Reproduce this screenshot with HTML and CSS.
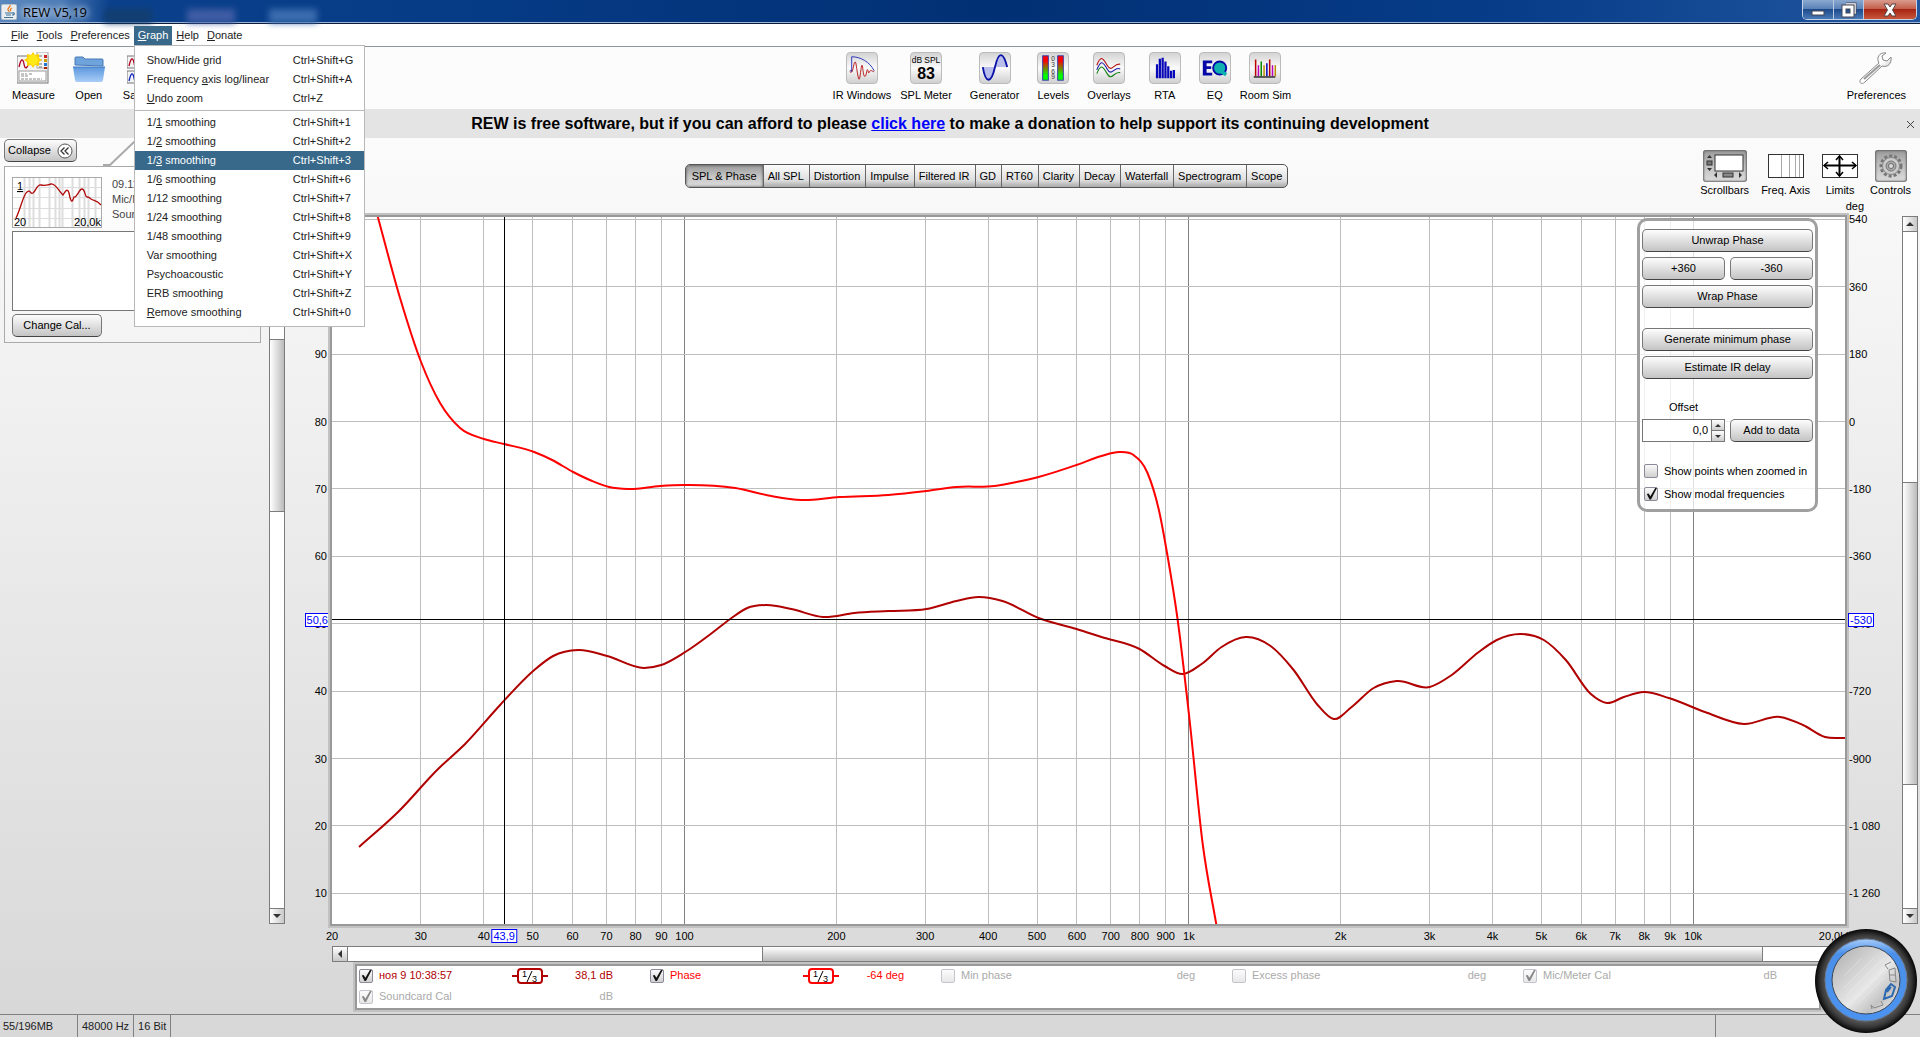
FILE: index.html
```html
<!DOCTYPE html>
<html lang="en">
<head>
  <meta charset="UTF-8" />
  <title>REW V5,19</title>
  <link rel="stylesheet" href="styles.css">
</head>
<body>
  <header class="titlebar">
    <svg class="app-icon" width="16" height="16" viewBox="0 0 16 16">
      <rect x="0" y="0" width="16" height="16" rx="2" fill="#e9edf0" stroke="#8da0b0"/>
      <path d="M9 1c1 2-3 3-2 5 .5 1 1.500 1 1 2M11 4c-2 1-2 2-1 3" fill="none" stroke="#e8781c" stroke-width="1.300"/>
      <path d="M4 9h7M5 11h5M3 13.500h9M11 9c3-1 3 2 0 2" fill="none" stroke="#3f7396" stroke-width="1.200"/>
    </svg>
    <span class="title">REW V5,19</span>
    <i class="ghost ghost-a"></i><i class="ghost ghost-b"></i><i class="ghost ghost-c"></i>
    <div class="window-buttons">
      <button aria-label="Minimize"><svg width="14" height="14"><rect x="1" y="8" width="12" height="4" fill="#fff" stroke="#445" /></svg></button>
      <button class="maximize" aria-label="Restore"><svg width="16" height="16"><path d="M5 2h9v9h-3" fill="none" stroke="#445" stroke-width="3"/><path d="M5 2h9v9h-3" fill="none" stroke="#fff" stroke-width="1.500"/><rect x="3" y="5" width="8" height="8" fill="none" stroke="#445" stroke-width="5"/><rect x="3" y="5" width="8" height="8" fill="none" stroke="#fff" stroke-width="3"/></svg></button>
      <button class="close" aria-label="Close"><svg width="16" height="14" viewBox="0 0 16 14"><path d="M2 1h4l2 3 2-3h4l-3.500 6 3.500 6h-4l-2-3-2 3H2l3.500-6z" fill="#fff" stroke="#544"/></svg></button>
    </div>
  </header>

  <nav class="menubar">
    <button><u>F</u>ile</button>
    <button><u>T</u>ools</button>
    <button><u>P</u>references</button>
    <div class="menu-open">
      <button class="active"><u>G</u>raph</button>
      <div class="menu">
        <button><span>Show/Hide <u>g</u>rid</span><kbd>Ctrl+Shift+G</kbd></button>
        <button><span>Frequency <u>a</u>xis log/linear</span><kbd>Ctrl+Shift+A</kbd></button>
        <button><span><u>U</u>ndo zoom</span><kbd>Ctrl+Z</kbd></button>
        <hr>
        <button><span>1/<u>1</u> smoothing</span><kbd>Ctrl+Shift+1</kbd></button>
        <button><span>1/<u>2</u> smoothing</span><kbd>Ctrl+Shift+2</kbd></button>
        <button class="active"><span>1/<u>3</u> smoothing</span><kbd>Ctrl+Shift+3</kbd></button>
        <button><span>1/<u>6</u> smoothing</span><kbd>Ctrl+Shift+6</kbd></button>
        <button><span>1/12 smoothing</span><kbd>Ctrl+Shift+7</kbd></button>
        <button><span>1/24 smoothing</span><kbd>Ctrl+Shift+8</kbd></button>
        <button><span>1/48 smoothing</span><kbd>Ctrl+Shift+9</kbd></button>
        <button><span>Var smoothing</span><kbd>Ctrl+Shift+X</kbd></button>
        <button><span>Psychoacoustic</span><kbd>Ctrl+Shift+Y</kbd></button>
        <button><span>ERB smoothing</span><kbd>Ctrl+Shift+Z</kbd></button>
        <button><span><u>R</u>emove smoothing</span><kbd>Ctrl+Shift+0</kbd></button>
      </div>
    </div>
    <button><u>H</u>elp</button>
    <button><u>D</u>onate</button>
  </nav>

  <div class="toolbar">
    <div class="tools tools-file">
      <button class="tool">
        <svg width="32" height="32">
          <rect x="0" y="4" width="31" height="27" fill="#f4f4f4" stroke="#777"/>
          <rect x="20" y="0" width="11" height="16" fill="#f4f4f4" stroke="#aaa"/>
          <path d="M2 15c2-9 4-9 5-3s3 5 5-2" fill="none" stroke="#b00020" stroke-width="1.300"/>
          <rect x="2" y="19" width="27" height="10" fill="#fff" stroke="#999"/>
          <path d="M4 22h6m2 0h3M4 24h8M4 27h21" stroke="#888" stroke-dasharray="3 1"/>
          <path d="M22 4h3m-3 4h3m-3 4h3m-3 3h3" stroke="#777"/>
          <path d="M27 3h3v3h-3z" fill="#c22"/><path d="M27 7h3v3h-3z" fill="#c90"/><path d="M27 11h3v3h-3z" fill="#27c"/><path d="M27 15h3v2h-3z" fill="#a20"/>
          <path d="M16 0l2 3 4-1v4l3 2-3 2 0 4-4-1-2 3-2-3-4 1 0-4-3-2 3-2V2l4 1z" fill="#ffd400"/>
          <circle cx="16" cy="8" r="5" fill="#ffea18"/>
        </svg>
        Measure
      </button>
      <button class="tool">
        <svg width="34" height="32">
          <defs><linearGradient id="folder" x1="0" y1="0" x2="0" y2="1"><stop offset="0" stop-color="#5b97dd"/><stop offset="1" stop-color="#a9cdf7"/></linearGradient></defs>
          <path d="M3 13V6q0-1 1-1h7l2 2h17q1 0 1 1v6z" fill="#6ea3dc" stroke="#4779b5"/>
          <path d="M1 15h32l-2 13q0 2-2 2H5q-2 0-2-2z" fill="url(#folder)"/>
          <path d="M1 15h32" stroke="#3c78c4"/>
        </svg>
        Open
      </button>
      <button class="tool">
        <svg width="32" height="32">
          <rect x="0" y="4" width="31" height="12" fill="#f4f4f4" stroke="#777"/>
          <rect x="0" y="19" width="31" height="12" fill="#f4f4f4" stroke="#777"/>
          <path d="M2 14c2-9 4-9 5-3s3 5 5-2" fill="none" stroke="#b00020" stroke-width="1.300"/>
          <path d="M2 29c2-9 4-9 5-3s3 5 5-2" fill="none" stroke="#1122c0" stroke-width="1.300"/>
        </svg>
        Save All
      </button>
    </div>
    <div class="tools">
      <button class="tool">
        <svg class="tile" viewBox="0 0 32 32"><path d="M5 20V4c9 0 19 5 24 15M3 19h3" fill="none" stroke="#2430b8"/><path d="M3 20c2 2 3-1 4-6s2-7 3 0 2 14 3 14 2-15 3-15 1 12 3 12 2-9 3-7 1 5 2 2 3 0 5 0" fill="none" stroke="#b81414"/></svg>
        IR Windows
      </button>
      <button class="tool">
        <svg class="tile" viewBox="0 0 32 32"><text x="16" y="11" font-size="9" text-anchor="middle">dB SPL</text><text x="16" y="28" font-size="17" font-weight="bold" text-anchor="middle">83</text></svg>
        SPL Meter
      </button>
      <button class="tool spaced">
        <svg class="tile" viewBox="0 0 32 32"><path d="M3 15h13C13 34 7 34 3 15M16 15c3-16 9-16 13 0z" fill="#b9bdea"/><path d="M3 15c3 18 9 18 13 0s9-16 13 0" fill="none" stroke="#0a12a8" stroke-width="2"/></svg>
        Generator
      </button>
      <button class="tool spaced">
        <svg class="tile" viewBox="0 0 32 32">
          <defs><linearGradient id="level" x1="0" y1="0" x2="0" y2="1"><stop offset="0.200" stop-color="#f00"/><stop offset="0.800" stop-color="#0f0"/></linearGradient></defs>
          <rect x="5" y="3" width="6" height="26" fill="url(#level)" stroke="#33a"/><rect x="21" y="3" width="6" height="26" fill="url(#level)" stroke="#33a"/>
          <g font-size="7" text-anchor="middle" fill="#333"><text x="16" y="9">0</text><text x="16" y="15">3</text><text x="16" y="22">6</text><text x="16" y="28">9</text></g>
        </svg>
        Levels
      </button>
      <button class="tool spaced">
        <svg class="tile" viewBox="0 0 32 32" fill="none" stroke-width="1.200"><path d="M3 13c4-10 6-9 11 0s7-3 14-1" stroke="#b81414"/><path d="M3 18c4-10 6-10 11-1s7-3 14 0" stroke="#1a1aa8"/><path d="M3 22c4-10 6-9 11 0s7-3 14-1" stroke="#118011"/></svg>
        Overlays
      </button>
      <button class="tool spaced">
        <svg class="tile" viewBox="0 0 32 32"><path d="M7.500 27V12m3 15V6m3 21V5m3 22V9m3 18V14m3 13v-8m3 8v-9" stroke="#0808b8" stroke-width="2.400"/></svg>
        RTA
      </button>
      <button class="tool spaced">
        <svg class="tile" viewBox="0 0 32 32"><path d="M3 8h10v3H7v3h5v3H7v4h6v3H3z" fill="#0707a8"/><circle cx="21" cy="16" r="7" fill="#10b0b0" stroke="#0707a8" stroke-width="2"/><path d="M23 20l5 3" stroke="#10b0b0" stroke-width="4"/></svg>
        EQ
      </button>
      <button class="tool">
        <svg class="tile" viewBox="0 0 32 32" stroke-width="1.600"><path d="M6 25V7M21 25V7" stroke="#b00"/><path d="M9 25V13M24 25V13" stroke="#b0b"/><path d="M12 25V9" stroke="#080"/><path d="M15 25V13M27 25V13" stroke="#b80"/><path d="M18 25V11" stroke="#00b"/><path d="M4 25.500h23" stroke="#333"/></svg>
        Room Sim
      </button>
    </div>
    <div class="tools">
      <button class="tool">
        <svg width="34" height="32" viewBox="0 0 34 32">
          <defs><linearGradient id="steel" x1="0" y1="0" x2="1" y2="1"><stop offset="0" stop-color="#eee"/><stop offset="0.500" stop-color="#fff"/><stop offset="1" stop-color="#999"/></linearGradient></defs>
          <path d="M27 1c-7-1-10 5-7 10L2 27c-3 4 1 6 4 3L23 14c6 2 10-3 9-9l-4 4-4-1-1-4z" fill="url(#steel)" stroke="#888"/>
          <path d="M5 27L21 13" stroke="#999" stroke-width="2"/><circle cx="4" cy="29" r="1.500" fill="#fff"/>
        </svg>
        Preferences
      </button>
    </div>
  </div>

  <div class="banner">
    <p>REW is free software, but if you can afford to please <a href="#">click here</a> to make a donation to help support its continuing development</p>
    <button aria-label="Dismiss"><svg width="7" height="7"><path d="M0 0l7 7M7 0L0 7" stroke="#444"/></svg></button>
  </div>

  <main>
    <aside class="measurements">
      <div class="measure-list">
        <div class="tab-row">
          <button class="btn collapse">Collapse
            <svg width="16" height="16"><circle cx="8" cy="8" r="7" fill="#fff" stroke="#555"/><path d="M7.500 4.500l-3.500 3.500 3.500 3.500M11.500 4.500L8 8l3.500 3.500" fill="none" stroke="#333" stroke-width="1.300"/></svg>
          </button>
          <svg class="tab-edge" width="34" height="26"><path d="M0 25h7L31 2h3v24H0z" fill="#fff"/><path d="M0 25h7L31 2h3" fill="none" stroke="#aaa" stroke-width="2"/></svg>
          <div class="tab-name"></div>
        </div>
        <section class="measure-card">
          <div class="measure-head">
            <svg class="thumb" width="90" height="51">
              <path d="M0 9.500h90M0 19.500h90M0 30.500h90M0 40.500h90" stroke="#ddd"/>
              <path d="M11.500 0v51M16.500 0v51M20.500 0v51M26.500 0v51M36.500 0v51M42.500 0v51M46.500 0v51M49.500 0v51M59.500 0v51M66.500 0v51M71.500 0v51M75.500 0v51M82.500 0v51" stroke="#ddd" stroke-width="2"/>
              <path d="M3 40C8 30 10 17 14 14s3 3 6 1 4-9 8-8 6 0 10-1 8 7 12 11c2-3 4-8 6-2 2 10 3 10 5 4 3 1 5-8 8-8s3 8 5 8 1 0 4 2 6 1 10 6" fill="none" stroke="#b00808" stroke-width="1.300"/>
              <text x="4" y="12" text-decoration="underline">1</text><text x="1" y="48">20</text><text x="88" y="48" text-anchor="end">20,0k</text>
            </svg>
            <div class="measure-info">09.11.2018<br>Mic/Meter<br>Soundcard</div>
          </div>
          <textarea aria-label="Notes"></textarea>
          <button class="btn">Change Cal...</button>
        </section>
      </div>
      <div class="vscroll list-scroll">
        <button aria-label="Up"><i class="up"></i></button>
        <div class="track"><span class="before"></span><span class="thumb-v"></span><span class="after"></span></div>
        <button aria-label="Down"><i class="down"></i></button>
      </div>
    </aside>

    <section class="graph">
      <div class="graph-head">
        <div class="tabs">
          <button class="selected">SPL &amp; Phase</button><button>All SPL</button><button>Distortion</button><button>Impulse</button><button>Filtered IR</button><button>GD</button><button>RT60</button><button>Clarity</button><button>Decay</button><button>Waterfall</button><button>Spectrogram</button><button>Scope</button>
        </div>
        <div class="graph-tools">
          <button class="tool">
            <svg class="pressed" width="44" height="32"><rect x="12" y="5" width="28" height="16" fill="#fff" stroke="#333"/><path d="M4 8l2.500-3L9 8zM4 18l2.500 3L9 18zM14 22v6l-3-3zM36 22v6l3-3z" fill="#333"/><rect x="4" y="11" width="5" height="4" fill="#777" stroke="#333"/><rect x="20" y="23" width="10" height="4" fill="#888" stroke="#333"/></svg>
            Scrollbars
          </button>
          <button class="tool">
            <svg width="36" height="32"><rect x="0.500" y="4.500" width="35" height="23" fill="#fff" stroke="#333"/><path d="M13.500 5v22M21.500 5v22M27.500 5v22M31.500 5v22" stroke="#aaa"/></svg>
            Freq. Axis
          </button>
          <button class="tool">
            <svg width="36" height="32"><rect x="0.500" y="4.500" width="35" height="23" fill="#fff" stroke="#333"/><path d="M2 15.500h32M17.500 6v20" stroke="#000" stroke-width="2"/><path d="M6 12l-4 3.500L6 19M30 12l4 3.500-4 3.500M14 10l3.500-4 3.500 4M14 22l3.500 4 3.500-4" fill="none" stroke="#000" stroke-width="1.500"/></svg>
            Limits
          </button>
          <button class="tool">
            <svg class="pressed" width="32" height="32"><circle cx="16" cy="16" r="10" fill="none" stroke="#777" stroke-width="3" stroke-dasharray="3 2"/><circle cx="16" cy="16" r="8.500" fill="#ccc" stroke="#888"/><circle cx="16" cy="16" r="5" fill="#aaa" stroke="#777"/><circle cx="16" cy="16" r="2.500" fill="#ddd" stroke="#666"/></svg>
            Controls
          </button>
        </div>
        <span class="unit">deg</span>
      </div>

      <div class="axis axis-left" id="dbAxis"></div>
      <div class="plot">
        <svg id="plot" viewBox="0 0 1512 707" preserveAspectRatio="none"></svg>
        <div class="controls">
          <button class="btn wide">Unwrap Phase</button>
          <button class="btn">+360</button>
          <button class="btn">-360</button>
          <button class="btn wide">Wrap Phase</button>
          <button class="btn wide group">Generate minimum phase</button>
          <button class="btn wide">Estimate IR delay</button>
          <label class="offset-label" for="offset">Offset</label>
          <div class="spinner">
            <input type="text" id="offset" value="0,0">
            <div><button aria-label="Increase"><i class="up"></i></button><button aria-label="Decrease"><i class="down"></i></button></div>
          </div>
          <button class="btn">Add to data</button>
          <label class="check group"><input type="checkbox">Show points when zoomed in</label>
          <label class="check"><input type="checkbox" checked>Show modal frequencies</label>
        </div>
      </div>
      <div class="axis axis-right" id="degAxis"></div>
      <div class="vscroll plot-scroll">
        <button aria-label="Up"><i class="up"></i></button>
        <div class="track"><span class="before"></span><span class="thumb-v"></span><span class="after"></span></div>
        <button aria-label="Down"><i class="down"></i></button>
      </div>

      <div class="axis axis-bottom" id="freqAxis"></div>
      <div class="hscroll">
        <button aria-label="Left"><i class="left"></i></button>
        <div class="track"><span class="before"></span><span class="thumb-h"></span><span class="after"></span></div>
        <button aria-label="Right"><i class="right"></i></button>
      </div>

      <div class="legend">
        <div class="trace spl"><label class="check"><input type="checkbox" checked>ноя 9 10:38:57</label>
          <svg width="36" height="18"><path d="M0 9h6M30 9h6" stroke="currentColor" stroke-width="2"/><rect x="6" y="2" width="24" height="14" rx="3" fill="#fff" stroke="currentColor" stroke-width="2"/><path d="M15 15l5-11" stroke="#000"/><text x="10" y="10" font-size="9">1</text><text x="20" y="15" font-size="9">3</text></svg>
          <output>38,1 dB</output></div>
        <div class="trace phase"><label class="check"><input type="checkbox" checked>Phase</label>
          <svg width="36" height="18"><path d="M0 9h6M30 9h6" stroke="currentColor" stroke-width="2"/><rect x="6" y="2" width="24" height="14" rx="3" fill="#fff" stroke="currentColor" stroke-width="2"/><path d="M15 15l5-11" stroke="#000"/><text x="10" y="10" font-size="9">1</text><text x="20" y="15" font-size="9">3</text></svg>
          <output>-64 deg</output></div>
        <div class="trace off"><label class="check"><input type="checkbox" disabled>Min phase</label><output>deg</output></div>
        <div class="trace off"><label class="check"><input type="checkbox" disabled>Excess phase</label><output>deg</output></div>
        <div class="trace off"><label class="check"><input type="checkbox" checked disabled>Mic/Meter Cal</label><output>dB</output></div>
        <div class="trace off"><label class="check"><input type="checkbox" checked disabled>Soundcard Cal</label><output>dB</output></div>
      </div>
    </section>
  </main>

  <footer class="statusbar">
    <span class="memory">55/196MB</span><span>48000 Hz</span><span>16 Bit</span><span class="fill"></span><span class="end"></span>
  </footer>

  <!-- volume knob gadget floating over the desktop -->
  <svg class="knob" width="104" height="106" viewBox="0 0 104 106">
    <defs>
      <radialGradient id="rim"><stop offset="0.780" stop-color="#555"/><stop offset="0.880" stop-color="#3a3a3a"/><stop offset="1" stop-color="#060606"/></radialGradient>
      <linearGradient id="blue" x1="0" y1="0" x2="0" y2="1"><stop offset="0" stop-color="#a6cbfa"/><stop offset="0.180" stop-color="#4a90ea"/><stop offset="1" stop-color="#4b93f0"/></linearGradient>
      <linearGradient id="metal" x1="0" y1="0" x2="1" y2="1"><stop offset="0" stop-color="#aaa"/><stop offset="0.300" stop-color="#ccc"/><stop offset="0.550" stop-color="#e8e8e8"/><stop offset="0.750" stop-color="#c4c4c4"/><stop offset="1" stop-color="#f2f2f2"/></linearGradient>
    </defs>
    <ellipse cx="52" cy="53" rx="51" ry="52" fill="url(#rim)"/>
    <circle cx="52" cy="52" r="41" fill="url(#blue)" stroke="#6a7c96"/>
    <circle cx="52" cy="52" r="34" fill="url(#metal)" stroke="#3c4656"/>
    <path d="M30 60l30-30M32 68l38-38M40 72l36-36M30 48l18-18M44 76l26-26" stroke="#fff" opacity="0.250"/>
    <g fill="none" stroke="#888"><path d="M71 37l6-3M74 41l-3-4M75 42l6-2 1 14-6-1zM75 47h6"/><path d="M72 62l5-6 4 3-3 9-8 3zM73 64l4-5" stroke="#2d68b0" stroke-width="2"/><path d="M57 77l3 3 9-3-2-4M57 77l1 4"/></g>
  </svg>

  <script>
    const NS = "http://www.w3.org/2000/svg";
    const W = 1512, H = 707;
    const plot = document.getElementById("plot");

    const fx = f => Math.log10(f / 20) / 3 * W;
    const dy = db => (110.35 - db) * 6.74;
    const degToDb = deg => 80 + deg / 18;

    function draw(d, cls) {
      const path = document.createElementNS(NS, "path");
      path.setAttribute("d", d);
      path.setAttribute("class", cls);
      plot.appendChild(path);
    }

    function label(axis, text, side, value, cls) {
      const span = document.createElement("span");
      span.textContent = text;
      span.style[side] = value + "%";
      if (cls) span.className = cls;
      document.getElementById(axis).appendChild(span);
    }

    // frequency grid, log scale
    for (let decade = 10; decade <= 10000; decade *= 10) {
      for (let n = 1; n < 10; n++) {
        const f = decade * n;
        if (f < 20 || f > 10000) continue;
        if (f > 20) draw(`M${fx(f)} 0V${H}`, n === 1 ? "grid major" : "grid");
        label("freqAxis", f >= 1000 ? f / 1000 + "k" : f, "left", fx(f) / W * 100);
      }
    }
    label("freqAxis", "20,0kHz", "left", 100, "last");

    for (let db = 10; db <= 110; db += 10) {
      draw(`M0 ${dy(db)}H${W}`, "grid");
      label("dbAxis", db, "top", dy(db) / H * 100);
    }
    ["540", "360", "180", "0", "-180", "-360", "-540", "-720", "-900", "-1 080", "-1 260"].forEach((text, i) => {
      label("degAxis", text, "top", dy(degToDb(540 - i * 180)) / H * 100);
    });

    const phase = [[45,-3],[68,81],[89,145],[108,186],[128,211],[152,222],[172,227],[202,235],[220,243],[241,255],[260,264],[277,270],[296,272],[328,269],[352,268],[403,271],[439,279],[469,283],[507,280],[556,278],[594,274],[624,270],[662,269],[684,265],[706,260],[744,248],[769,239],[787,235],[801,238],[815,256],[827,296],[835,339],[845,402],[857,503],[870,626],[884,709]];
    const spl = [[27,630],[66,595],[106,552],[133,527],[168,488],[201,454],[221,439],[246,433],[275,439],[312,451],[329,448],[353,435],[381,415],[398,402],[415,391],[434,388],[459,392],[491,400],[522,396],[556,394],[594,392],[624,384],[646,380],[670,384],[706,401],[744,412],[769,420],[807,432],[832,449],[850,457],[869,447],[889,430],[913,420],[938,429],[961,453],[985,488],[1001,502],[1019,490],[1041,471],[1064,464],[1097,470],[1119,458],[1146,435],[1164,423],[1188,417],[1211,423],[1233,443],[1258,477],[1274,486],[1291,480],[1311,475],[1336,481],[1372,495],[1411,507],[1447,500],[1470,508],[1492,520],[1512,521]];

    // cubic through the points, slope at each one weighted by its spacing
    function smooth(p) {
      const step = p.slice(1).map((b, i) => b[0] - p[i][0]);
      const rise = p.slice(1).map((b, i) => (b[1] - p[i][1]) / step[i]);
      const slope = p.map((_, i) => {
        if (i === 0) return rise[0];
        if (i === p.length - 1) return rise[i - 1];
        return (rise[i - 1] * step[i] + rise[i] * step[i - 1]) / (step[i - 1] + step[i]);
      });
      let d = `M${p[0]}`;
      for (let i = 0; i < step.length; i++) {
        const [x0, y0] = p[i], [x1, y1] = p[i + 1], h = step[i] / 3;
        d += `C${x0 + h} ${y0 + slope[i] * h} ${x1 - h} ${y1 - slope[i + 1] * h} ${x1} ${y1}`;
      }
      return d;
    }
    draw(smooth(spl), "curve-spl");
    draw(smooth(phase), "curve-phase");

    // cursor
    const cx = fx(43.9), cy = dy(50.6);
    draw(`M${cx} 0V${H}M0 ${cy}H${W}`, "cursor");
    label("freqAxis", "43,9", "left", cx / W * 100, "tag");
    label("dbAxis", "50,6", "top", cy / H * 100, "tag");
    label("degAxis", "-530", "top", cy / H * 100, "tag");
  </script>
</body>
</html>
```
FILE: styles.css
```css
* {
  box-sizing: border-box;
}
body {
  margin: 0;
  height: 100vh;
  display: flex;
  flex-direction: column;
  overflow: hidden;
  position: relative;
  font-family: "Liberation Sans", Arial, sans-serif;
  font-size: 11px;
  line-height: 13px;
  color: #000;
  background: #d8d8d8;
}
button, input, textarea, kbd {
  font: inherit;
  color: inherit;
}
button {
  padding: 0;
  border: 0;
  background: none;
}
svg {
  display: block;
}

/* title bar */
.titlebar {
  height: 24px;
  display: flex;
  align-items: center;
  position: relative;
  padding-left: 1px;
  border-bottom: 1px solid #0a1c3c;
  box-shadow: inset 0 -1px #9db4d4;
  background: linear-gradient(90deg, #5a87bd 0, #4d7cb6 60px, #0b418c 110px, #053a84 500px, #023074 1000px, #063c88 1500px, #22569f 100%);
}
.title {
  margin-left: 6px;
  font: 13px/16px "Open Sans", sans-serif;
  text-shadow: 0 0 6px #fff, 0 0 8px #cfe0f4;
}
.ghost {
  position: absolute;
  top: 9px;
  width: 48px;
  height: 14px;
  filter: blur(3px);
  background: #3a6cae;
}
.ghost-a { left: 104px; background: #123e70; }
.ghost-b { left: 187px; background: #3f5ca4; }
.ghost-c { left: 269px; }
.window-buttons {
  display: flex;
  align-self: flex-start;
  margin: 0 3px 0 auto;
  height: 20px;
  border: 1px solid #c5d3e6;
  border-top: 0;
  border-radius: 0 0 5px 5px;
  overflow: hidden;
}
.window-buttons button {
  width: 31px;
  display: flex;
  align-items: center;
  justify-content: center;
  border-right: 1px solid #b9cae2;
  background: linear-gradient(#8aa9d0, #5b83b8 45%, #1d4b8c 50%, #4a7ab8);
}
.window-buttons .maximize {
  width: 30px;
}
.window-buttons .close {
  width: 52px;
  border: 0;
  background: linear-gradient(#d99b8c, #c4604c 45%, #a62512 50%, #c9573c);
}

/* menus */
.menubar {
  display: flex;
  height: 23px;
  padding: 2px 7px;
  border-bottom: 1px solid #8f9498;
  background: #fff;
  color: #222;
}
.menubar > button, .menu-open > button {
  height: 19px;
  padding: 0 4px;
}
.menu-open {
  position: relative;
}
.menubar .active {
  background: #39698a;
  color: #fff;
}
.menu {
  position: absolute;
  z-index: 5;
  top: 19px;
  left: 0;
  width: 231px;
  padding: 5px 0 4px;
  border: 1px solid #b8b8b8;
  background: #fff;
}
.menu button {
  display: flex;
  align-items: center;
  width: 100%;
  height: 19px;
  padding-left: 12px;
  text-align: left;
}
.menu span {
  width: 146px;
}
.menu hr {
  margin: 2px 0;
  border: 0;
  border-top: 1px solid #b8b8b8;
}

/* toolbar */
.toolbar {
  display: flex;
  justify-content: space-between;
  height: 62px;
  padding: 5px 14px 0 12px;
  background: #fcfcfc;
}
.tools {
  display: flex;
  align-items: flex-start;
  gap: 9px;
}
.tools-file {
  gap: 17px;
  flex-basis: 265px;
}
.tool {
  display: flex;
  flex-direction: column;
  align-items: center;
  gap: 5px;
  min-width: 32px;
  white-space: nowrap;
}
.spaced {
  margin-left: 9px;
}
.tile {
  width: 32px;
  height: 32px;
  border: 1px solid #bbb;
  border-radius: 4px;
  background: linear-gradient(#d4d4d4, #fafafa 50%, #d0d0d0);
}

.banner {
  display: flex;
  align-items: center;
  height: 29px;
  padding: 1px 6px 0 0;
  background: #e4e4e4;
}
.banner p {
  flex: 1;
  margin: 0;
  padding-right: 7px;
  text-align: center;
  font-size: 16px;
  line-height: 20px;
  font-weight: bold;
}
.banner a {
  color: #00f;
}

/* shared widgets */
.btn {
  height: 23px;
  border: 1px solid #777;
  border-bottom-color: #444;
  border-radius: 5px;
  background: linear-gradient(#fdfdfd, #e6e6e6 40%, #c4c4c4);
}
.check {
  display: flex;
  align-items: center;
  gap: 6px;
}
.check input {
  appearance: none;
  width: 14px;
  height: 14px;
  margin: 0;
  border: 1px solid #8a8a98;
  border-radius: 2px;
  background: linear-gradient(#fafafa, #d0d0d0);
}
.check input:checked::before {
  content: "";
  display: block;
  width: 12px;
  height: 12px;
  background: #111;
  clip-path: polygon(15% 50%, 30% 45%, 45% 68%, 85% 0, 100% 0, 50% 95%, 38% 95%);
}
.check input:disabled {
  opacity: 0.5;
}
.up, .down, .left, .right {
  border: 4px solid transparent;
}
.up { border-top: 0; border-bottom-color: #333; }
.down { border-bottom: 0; border-top-color: #333; }
.left { border-left: 0; border-right-color: #333; }
.right { border-right: 0; border-left-color: #333; }

.vscroll, .hscroll {
  display: flex;
  border: 1px solid #7c7c7c;
  background: #fff;
}
.vscroll {
  flex-direction: column;
  width: 16px;
}
.vscroll button, .hscroll button {
  display: flex;
  align-items: center;
  justify-content: center;
  width: 14px;
  height: 14px;
  background: linear-gradient(90deg, #fff, #c8c8c8);
}
.track {
  flex: 1;
  display: flex;
}
.vscroll .track {
  flex-direction: column;
  border: solid #7c7c7c;
  border-width: 1px 0;
}
.hscroll .track {
  border: solid #7c7c7c;
  border-width: 0 1px;
}
.thumb-v {
  border: solid #7c7c7c;
  border-width: 1px 0;
  background: linear-gradient(90deg, #fff, #bbb);
}
.thumb-h {
  border: solid #7c7c7c;
  border-width: 0 1px;
  background: linear-gradient(#fff, #bbb);
}

main {
  flex: 1;
  display: flex;
  min-height: 0;
  background: linear-gradient(#fbfbfb, #d8d8d8);
}

/* measurement list */
.measurements {
  display: flex;
  gap: 8px;
  width: 285px;
  padding: 0 0 90px 4px;
}
.measure-list {
  flex: 1;
}
.tab-row {
  display: flex;
  height: 28px;
}
.collapse {
  display: flex;
  align-items: center;
  justify-content: center;
  gap: 6px;
  width: 73px;
  margin: 1px 26px 0 0;
}
.tab-edge {
  margin-top: 2px;
}
.tab-name {
  flex: 1;
  margin-top: 3px;
  border-top: 2px solid #aaa;
  background: #fff;
}
.measure-card {
  padding: 10px 7px 5px;
  border: 1px solid #aaa;
  background: linear-gradient(#fff, #f4f4f4);
}
.measure-head {
  display: flex;
  gap: 10px;
}
.thumb {
  border: 1px solid #aaa;
  background: #fff;
}
.thumb text {
  font-size: 11px;
}
.measure-info {
  line-height: 15px;
  color: #444;
}
.measure-card textarea {
  display: block;
  width: 100%;
  height: 80px;
  margin: 3px 0;
  border: 1px solid #777;
  background: #fff;
  resize: none;
}
.measure-card .btn {
  width: 90px;
}
.list-scroll {
  margin-top: 28px;
}
.list-scroll .before { flex: 158; }
.list-scroll .thumb-v { flex: 172; }
.list-scroll .after { flex: 399; }

/* graph area */
.graph {
  flex: 1;
  display: grid;
  grid-template-columns: 45px 1fr 55px 16px;
  grid-template-rows: 77px 1fr 20px 16px 2px 46px;
  padding: 0 2px 4px 0;
}
.graph-head {
  grid-column: 1 / -1;
  display: flex;
  justify-content: center;
  align-items: flex-start;
  position: relative;
  padding-right: 230px;
}
.tabs {
  display: flex;
  height: 24px;
  margin-top: 26px;
  border: 1px solid #555;
  border-radius: 5px;
  overflow: hidden;
  background: linear-gradient(#fcfcfc, #ddd 70%, #aaa);
}
.tabs button {
  padding: 0 5px 0 4px;
  border-right: 1px solid #666;
}
.tabs button:last-child {
  border-right: 0;
}
.tabs .selected {
  padding: 0 6px;
  background: linear-gradient(#999, #c4c4c4 50%, #ddd);
  box-shadow: inset 0 0 3px #444;
}
.graph-tools {
  position: absolute;
  top: 12px;
  right: 7px;
  display: flex;
  gap: 12px;
}
.graph-tools .tool {
  gap: 2px;
}
.pressed {
  border-radius: 3px;
  background: linear-gradient(#999, #bbb 40%, #ddd);
  box-shadow: inset 0 0 2px 1px #666;
}
.unit {
  position: absolute;
  top: 62px;
  right: 54px;
}
.plot {
  position: relative;
  min-height: 0;
  border: 2px solid #999;
  box-shadow: 0 0 0 2px #c2c2c2;
  background: #fff;
}
#plot {
  position: absolute;
  width: 100%;
  height: 100%;
}
#plot path {
  fill: none;
  vector-effect: non-scaling-stroke;
}
.grid, .cursor {
  shape-rendering: crispEdges;
}
.grid { stroke: #bebebe; }
.grid.major { stroke: #808080; }
.cursor { stroke: #000; }
.curve-spl { stroke: #b00000; stroke-width: 2px; }
.curve-phase { stroke: #f00; stroke-width: 2px; }

.axis {
  position: relative;
}
.axis-left, .axis-right {
  margin: 2px 0;
}
.axis-bottom {
  grid-column: 2;
  margin: 0 2px;
}
/* labels sit at their value along the axis */
.axis span {
  position: absolute;
  white-space: nowrap;
}
.axis-left span {
  right: 3px;
  transform: translateY(-50%);
}
.axis-right span {
  left: 2px;
  transform: translateY(-50%);
}
.axis-bottom span {
  top: 4px;
  transform: translateX(-50%);
}
.axis-bottom .last {
  padding-right: 12px;
}
.axis .tag {
  padding: 0 1px;
  border: 1px solid #00f;
  background: #fff;
  color: #00f;
  line-height: 12px;
}
.axis-left .tag {
  right: 0;
}
.axis-right .tag {
  left: 1px;
}
.axis-bottom .tag {
  top: 3px;
}
.plot-scroll {
  margin: 1px 0 2px;
}
.plot-scroll .before { flex: 251; }
.plot-scroll .thumb-v { flex: 303; }
.plot-scroll .after { flex: 124; }
.hscroll {
  grid-column: 2;
  margin: 0 2px;
}
.hscroll button {
  background: linear-gradient(#fff, #c8c8c8);
}
.hscroll .before { flex: 414; }
.hscroll .thumb-h { flex: 1000; }
.hscroll .after { flex: 66; }

/* phase controls panel */
.controls {
  position: absolute;
  top: 1px;
  right: 27px;
  width: 181px;
  display: grid;
  grid-template-columns: repeat(2, minmax(0, 1fr));
  gap: 5px;
  padding: 8px 2px 4px;
  border: 3px solid #a0a0a0;
  border-radius: 10px;
  background: rgba(255, 255, 255, 0.75);
}
.controls .wide, .controls .check {
  grid-column: 1 / -1;
}
.controls .wide.group {
  margin-top: 15px;
}
.offset-label {
  grid-column: 1;
  margin-top: 17px;
  text-align: center;
}
.spinner {
  grid-column: 1;
  display: flex;
  height: 23px;
  border: 1px solid #777;
  background: #fff;
}
.spinner input {
  flex: 1;
  min-width: 0;
  border: 0;
  padding: 0 3px;
  text-align: right;
}
.spinner div {
  display: flex;
  flex-direction: column;
  width: 13px;
  border-left: 1px solid #777;
}
.spinner button {
  flex: 1;
  display: flex;
  align-items: center;
  justify-content: center;
  background: linear-gradient(#fff, #ccc);
}
.spinner button + button {
  border-top: 1px solid #777;
}
.spinner i {
  border-width: 3px;
}
.spinner .up { border-top: 0; }
.spinner .down { border-bottom: 0; }
.controls .check {
  margin: 0 0 4px 2px;
}
.controls .check.group {
  margin-top: 17px;
}

.legend {
  grid-row: 6;
  grid-column: 2;
  display: grid;
  grid-template-columns: repeat(5, 1fr);
  grid-template-rows: 19px 23px;
  margin: 0 26px 0 25px;
  padding: 0 5px 0 2px;
  border: 2px solid #999;
  box-shadow: 0 0 0 2px #c2c2c2;
  background: #fff;
  align-items: center;
}
.trace {
  display: flex;
  align-items: center;
}
.trace .check {
  width: 153px;
}
.trace output {
  width: 65px;
  text-align: right;
}
.trace.off output {
  margin-left: auto;
  margin-right: 37px;
}
.trace svg text {
  fill: #000;
}
.spl { color: #b00000; }
.phase { color: #f00; }
.off { color: #aaa; }

.statusbar {
  display: flex;
  height: 23px;
  border-top: 1px solid #808080;
  line-height: 23px;
  color: #222;
}
.statusbar span {
  padding: 0 4px;
  border-right: 1px solid #808080;
}
.statusbar .memory {
  width: 78px;
  padding-left: 3px;
}
.statusbar .fill {
  flex: 1;
}
.statusbar .end {
  width: 204px;
  border: 0;
}
.knob {
  position: absolute;
  right: 2px;
  bottom: 3px;
}
```
